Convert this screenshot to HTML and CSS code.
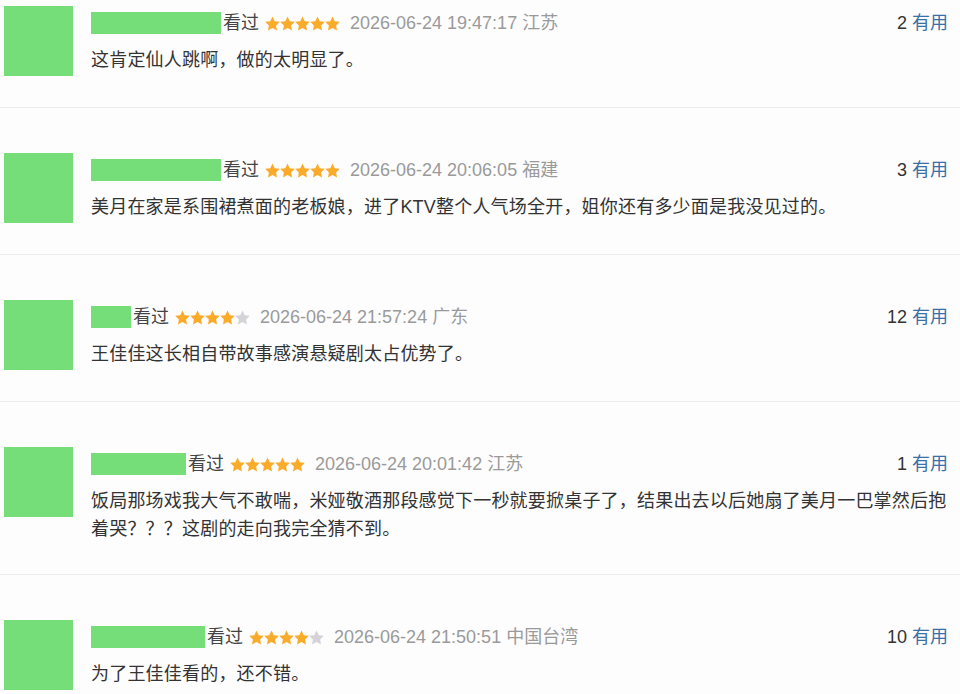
FILE: index.html
```html
<!DOCTYPE html>
<html lang="zh-CN">
<head>
  <meta charset="UTF-8" />
  <meta name="viewport" content="width=device-width, initial-scale=1.0"/>
  <title>短评</title>
  <link rel="stylesheet" href="styles.css">
</head>
<body>
  <svg width="0" height="0" style="position:absolute">
    <defs>
      <symbol id="star" viewBox="1.2 1.2 21.6 20.6">
        <path d="M12 1.5l3.2 6.6 7.3 1-5.3 5.1 1.3 7.2L12 18l-6.5 3.4 1.3-7.2L1.5 9.1l7.3-1z"/>
      </symbol>
    </defs>
  </svg>

  <div class="comments">
    <div class="comment">
      <div class="avatar"></div>
      <div class="body">
        <div class="meta">
          <span class="name" style="width: 130px;"></span>
          <span class="seen">看过</span>
          <span class="stars">
            <svg class="on"><use href="#star"/></svg><svg class="on"><use href="#star"/></svg><svg class="on"><use href="#star"/></svg><svg class="on"><use href="#star"/></svg><svg class="on"><use href="#star"/></svg>
          </span>
          <span class="time">2026-06-24 19:47:17 江苏</span>
          <span class="votes"><span class="count">2</span> <a href="#">有用</a></span>
        </div>
        <p class="text">这肯定仙人跳啊，做的太明显了。</p>
      </div>
    </div>

    <div class="comment">
      <div class="avatar"></div>
      <div class="body">
        <div class="meta">
          <span class="name" style="width: 130px;"></span>
          <span class="seen">看过</span>
          <span class="stars">
            <svg class="on"><use href="#star"/></svg><svg class="on"><use href="#star"/></svg><svg class="on"><use href="#star"/></svg><svg class="on"><use href="#star"/></svg><svg class="on"><use href="#star"/></svg>
          </span>
          <span class="time">2026-06-24 20:06:05 福建</span>
          <span class="votes"><span class="count">3</span> <a href="#">有用</a></span>
        </div>
        <p class="text">美月在家是系围裙煮面的老板娘，进了KTV整个人气场全开，姐你还有多少面是我没见过的。</p>
      </div>
    </div>

    <div class="comment">
      <div class="avatar"></div>
      <div class="body">
        <div class="meta">
          <span class="name" style="width: 40px;"></span>
          <span class="seen">看过</span>
          <span class="stars">
            <svg class="on"><use href="#star"/></svg><svg class="on"><use href="#star"/></svg><svg class="on"><use href="#star"/></svg><svg class="on"><use href="#star"/></svg><svg class="off"><use href="#star"/></svg>
          </span>
          <span class="time">2026-06-24 21:57:24 广东</span>
          <span class="votes"><span class="count">12</span> <a href="#">有用</a></span>
        </div>
        <p class="text">王佳佳这长相自带故事感演悬疑剧太占优势了。</p>
      </div>
    </div>

    <div class="comment">
      <div class="avatar"></div>
      <div class="body">
        <div class="meta">
          <span class="name" style="width: 95px;"></span>
          <span class="seen">看过</span>
          <span class="stars">
            <svg class="on"><use href="#star"/></svg><svg class="on"><use href="#star"/></svg><svg class="on"><use href="#star"/></svg><svg class="on"><use href="#star"/></svg><svg class="on"><use href="#star"/></svg>
          </span>
          <span class="time">2026-06-24 20:01:42 江苏</span>
          <span class="votes"><span class="count">1</span> <a href="#">有用</a></span>
        </div>
        <p class="text">饭局那场戏我大气不敢喘，米娅敬酒那段感觉下一秒就要掀桌子了，结果出去以后她扇了美月一巴掌然后抱着哭？？？这剧的走向我完全猜不到。</p>
      </div>
    </div>

    <div class="comment">
      <div class="avatar"></div>
      <div class="body">
        <div class="meta">
          <span class="name" style="width: 114px;"></span>
          <span class="seen">看过</span>
          <span class="stars">
            <svg class="on"><use href="#star"/></svg><svg class="on"><use href="#star"/></svg><svg class="on"><use href="#star"/></svg><svg class="on"><use href="#star"/></svg><svg class="off"><use href="#star"/></svg>
          </span>
          <span class="time">2026-06-24 21:50:51 中国台湾</span>
          <span class="votes"><span class="count">10</span> <a href="#">有用</a></span>
        </div>
        <p class="text">为了王佳佳看的，还不错。</p>
      </div>
    </div>
  </div>
</body>
</html>
```

FILE: styles.css
```css
:root {
  --green: #76de78;
  --text: #333333;
  --muted: #9a9a9a;
  --link: #3a6fa8;
  --star: #fbab2a;
  --star-off: #d4d4d8;
  --line: #ececee;
}

body {
  margin: 0;
  background: #fdfdfe;
  color: var(--text);
  font-family: "Liberation Sans", "Noto Sans CJK SC", sans-serif;
  font-size: 18px;
  overflow: hidden;
}

.comment {
  display: flex;
  padding: 45px 12px 31px 4px;
  border-bottom: 1px solid var(--line);
}

.comment:first-child {
  padding-top: 6px;
}

.avatar {
  flex: none;
  width: 69px;
  height: 70px;
  background: var(--green);
}

.body {
  flex: 1;
  margin-left: 18px;
  padding-top: 6px;
}

.meta {
  display: flex;
  align-items: center;
  height: 22px;
  line-height: 22px;
}

.name {
  display: inline-block;
  height: 22px;
  background: var(--green);
  margin-right: 2px;
}

.seen {
  color: #444;
}

.stars {
  display: inline-flex;
  margin: 0 10px 0 6px;
}

.stars svg {
  width: 15px;
  height: 15px;
}

.stars .on {
  fill: var(--star);
}

.stars .off {
  fill: var(--star-off);
}

.time {
  color: var(--muted);
}

.votes {
  margin-left: auto;
  white-space: pre;
}

.votes .count {
  color: var(--text);
}

.votes a {
  color: var(--link);
  text-decoration: none;
}

.text {
  margin: 12px 0 0;
  line-height: 28px;
  letter-spacing: 0.2px;
}
```
